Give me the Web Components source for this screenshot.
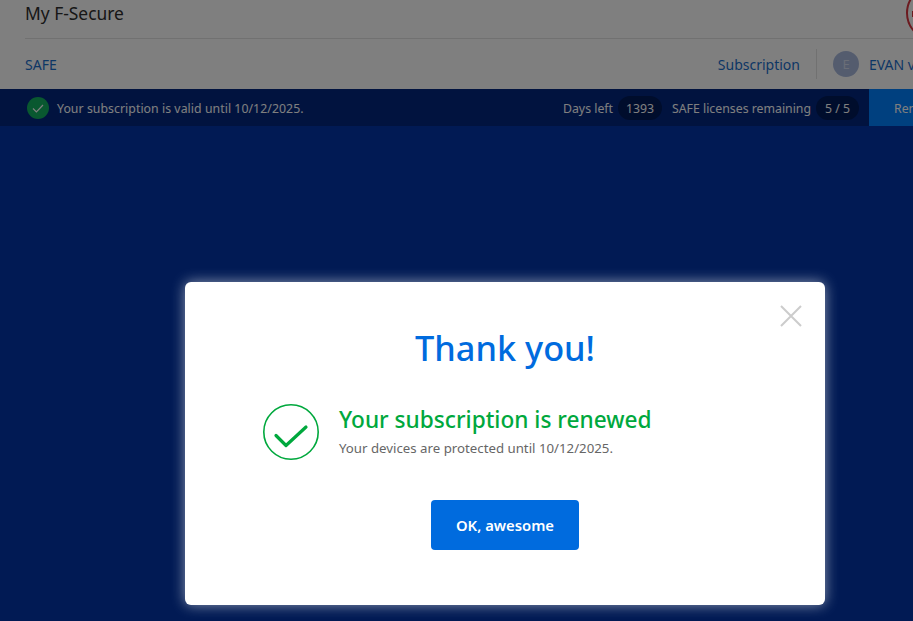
<!DOCTYPE html>
<html lang="en"><head><meta charset="utf-8"><title>My F-Secure</title>
<style>
html,body{margin:0;height:100%;overflow:hidden;background:#0234a8}
body{font-family:"Noto Sans","Open Sans","Liberation Sans",sans-serif}
</style></head><body>
<fs-app>
  <fs-header></fs-header>
  <fs-status></fs-status>
  <fs-modal>
    <fs-result></fs-result>
  </fs-modal>
</fs-app>
<script>
function def(name,html){
  customElements.define(name,class extends HTMLElement{
    constructor(){super();this.attachShadow({mode:'open'}).innerHTML=html;}
  });
}
def('fs-app',`<style>
:host{display:block;position:relative;width:913px;height:621px;overflow:hidden;background:#0234a8}
.page{width:1000px;display:flex;flex-direction:column}
</style>
<div class="page"><slot></slot></div>`);
def('fs-header',`<style>
:host{display:block;background:#fff;padding-left:25px;height:89px;box-sizing:border-box;color:#333}
.top{height:27px;padding-bottom:11px;border-bottom:1px solid #e2e2e2;display:flex;justify-content:space-between}
h1{margin:0;font-size:17.4px;font-weight:400;line-height:27px;color:#2e2e2e}
.logo{position:relative;width:56px;height:56px;border:2px solid #d8343f;border-radius:50%;box-sizing:border-box;margin:-15px 38px 0 0;flex:none}
.logo i{position:absolute;left:4px;top:24px;width:3px;height:6px;background:#d8343f}
nav{height:50px;display:flex;align-items:center;color:#1b6ecb;font-size:14px}
.s{flex:1}
.sub{padding-right:16px;border-right:1px solid #e2e2e2;height:30px;line-height:31px}
.av{width:26px;height:26px;border-radius:50%;background:#a9b9dd;color:#d4dcee;font-size:13px;display:flex;align-items:center;justify-content:center;margin:0 10px 0 16px}
</style>
<div class="top"><h1>My F-Secure</h1><div class="logo"><i></i></div></div>
<nav><span>SAFE</span><span class="s"></span><span class="sub">Subscription</span><span class="av">E</span><span style="width:131px;white-space:nowrap;overflow:hidden">EVAN vanderbilt</span></nav>`);
def('fs-status',`<style>
:host{display:flex;align-items:center;height:37px;background:#02267f;color:#fff;font-size:12.3px;padding-left:27px;white-space:nowrap}
.ok{width:22px;height:22px;margin-right:8px;flex:none}
.s{flex:1}
.t{padding-top:2px}
.wide{letter-spacing:.045px}
.pill{background:#011a58;border-radius:12px;height:24px;line-height:25px;width:44px;text-align:center;margin:0 10px 0 5px}
.pill.last{width:43px}
.renew{width:131px;height:37px;line-height:39px;background:#0080ff;padding-left:25px;box-sizing:border-box;flex:none}
</style>
<svg class="ok" viewBox="0 0 22 22"><circle cx="11" cy="11" r="11" fill="#12b060"/><path d="M6 11.5l3.4 3.4L16 8" fill="none" stroke="#fff" stroke-width="1.2"/></svg>
<span class="t wide">Your subscription is valid until 10/12/2025.</span><span class="s"></span>
<span class="t">Days left</span><span class="pill">1393</span><span class="t">SAFE licenses remaining</span><span class="pill last">5 / 5</span><span class="renew">Renew</span>`);
def('fs-modal',`<style>
:host{position:absolute;inset:0;display:block;background:rgba(0,0,0,.5)}
.card{position:absolute;left:185px;top:282px;width:640px;height:323px;background:#fff;border-radius:6px;box-shadow:0 0 14px rgba(255,255,255,.55);display:flex;flex-direction:column;align-items:center;color:#666}
.x{position:absolute;right:23px;top:23px;width:22px;height:22px}
h2{margin:42px 0 0;font-size:34.3px;line-height:48px;font-weight:500;color:#006bde}
button{margin-top:40px;width:148px;height:50px;border:0;border-radius:4px;background:#006bde;color:#fff;font:600 14.8px "Noto Sans","Open Sans",sans-serif}
</style>
<div class="card">
<svg class="x" viewBox="0 0 22 22"><path d="M1 1l20 20M21 1L1 21" stroke="#ccc" stroke-width="2" fill="none"/></svg>
<h2>Thank you!</h2><slot></slot><button>OK, awesome</button></div>`);
def('fs-result',`<style>
:host{display:flex;align-self:stretch;padding:32px 0 0 78px;align-items:center;height:56px}
svg{width:56px;height:56px;flex:none;margin-right:20px}
.h{font-size:22.65px;line-height:30px;font-weight:500;color:#00a83d}
.p{font-size:13.25px;line-height:18px;color:#666;margin-top:4px}
.t{margin-top:-2px}
</style>
<svg viewBox="0 0 56 56"><circle cx="28" cy="28" r="27.2" fill="none" stroke="#00a83d" stroke-width="1.6"/><path d="M13 31.5l10 10L43 23" fill="none" stroke="#00a83d" stroke-width="3.2" stroke-linecap="round" stroke-linejoin="round"/></svg>
<div class="t"><div class="h">Your subscription is renewed</div><div class="p">Your devices are protected until 10/12/2025.</div></div>`);
</script>
</body></html>
